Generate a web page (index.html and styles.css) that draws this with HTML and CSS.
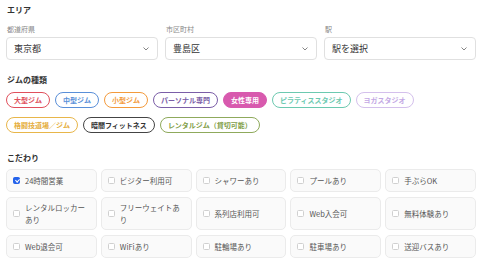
FILE: index.html
```html
<!DOCTYPE html>
<html lang="ja">
<head>
  <meta charset="UTF-8" />
  <meta name="viewport" content="width=device-width, initial-scale=1.0" />
  <title>ジム検索</title>
  <link rel="stylesheet" href="styles.css">
</head>
<body>
  <div class="search">

    <!-- エリア -->
    <h2 class="section-title first">エリア</h2>
    <div class="area-row">
      <div class="field">
        <label class="field-label">都道府県</label>
        <div class="select">
          <span>東京都</span>
          <svg class="chevron" viewBox="0 0 6 4"><path d="M0.5 0.5 L3 3 L5.5 0.5" /></svg>
        </div>
      </div>
      <div class="field">
        <label class="field-label">市区町村</label>
        <div class="select">
          <span>豊島区</span>
          <svg class="chevron" viewBox="0 0 6 4"><path d="M0.5 0.5 L3 3 L5.5 0.5" /></svg>
        </div>
      </div>
      <div class="field">
        <label class="field-label">駅</label>
        <div class="select">
          <span>駅を選択</span>
          <svg class="chevron" viewBox="0 0 6 4"><path d="M0.5 0.5 L3 3 L5.5 0.5" /></svg>
        </div>
      </div>
    </div>

    <!-- ジムの種類 -->
    <h2 class="section-title types-title">ジムの種類</h2>
    <div class="tags">
      <span class="tag tag-red">大型ジム</span>
      <span class="tag tag-blue">中型ジム</span>
      <span class="tag tag-orange">小型ジム</span>
      <span class="tag tag-purple">パーソナル専門</span>
      <span class="tag tag-pink active">女性専用</span>
      <span class="tag tag-teal">ピラティススタジオ</span>
      <span class="tag tag-lavender">ヨガスタジオ</span>
      <span class="tag tag-gold">格闘技道場／ジム</span>
      <span class="tag tag-dark">暗闇フィットネス</span>
      <span class="tag tag-olive">レンタルジム（貸切可能）</span>
    </div>

    <!-- こだわり -->
    <h2 class="section-title kodawari-title">こだわり</h2>
    <div class="options">
      <label class="option"><span class="check checked"></span><span>24時間営業</span></label>
      <label class="option"><span class="check"></span><span>ビジター利用可</span></label>
      <label class="option"><span class="check"></span><span>シャワーあり</span></label>
      <label class="option"><span class="check"></span><span>プールあり</span></label>
      <label class="option"><span class="check"></span><span>手ぶらOK</span></label>
      <label class="option"><span class="check"></span><span>レンタルロッカーあり</span></label>
      <label class="option"><span class="check"></span><span>フリーウェイトあり</span></label>
      <label class="option"><span class="check"></span><span>系列店利用可</span></label>
      <label class="option"><span class="check"></span><span>Web入会可</span></label>
      <label class="option"><span class="check"></span><span>無料体験あり</span></label>
      <label class="option"><span class="check"></span><span>Web退会可</span></label>
      <label class="option"><span class="check"></span><span>WiFiあり</span></label>
      <label class="option"><span class="check"></span><span>駐輪場あり</span></label>
      <label class="option"><span class="check"></span><span>駐車場あり</span></label>
      <label class="option"><span class="check"></span><span>送迎バスあり</span></label>
    </div>

  </div>
</body>
</html>
```

FILE: styles.css
```css
/* RESET */
* {
  margin: 0;
  padding: 0;
  box-sizing: border-box;
}

body {
  background-color: #fff;
  font-family: "Noto Sans CJK JP", "Noto Sans", sans-serif;
  color: #333;
}

.search {
  padding: 0 4px 0 6px;
}

/* 見出し */
.section-title {
  font-size: 8px;
  line-height: 12px;
  font-weight: 700;
  color: #333;
  padding-left: 1px;
}
.section-title.first {
  margin-top: 4px;
}
.types-title {
  margin-top: 14px;
}
.kodawari-title {
  margin-top: 19px;
}

/* エリア */
.area-row {
  display: flex;
  gap: 7px;
  margin-top: 8px;
}
.field {
  flex: 1;
}
.field-label {
  display: block;
  font-size: 7px;
  line-height: 10px;
  color: #888;
  padding-left: 1px;
}
.select {
  margin-top: 3px;
  height: 23px;
  border: 1px solid #e0e0e0;
  border-radius: 4px;
  padding: 0 8px 0 7px;
  display: flex;
  align-items: center;
  justify-content: space-between;
  font-size: 9px;
  color: #333;
  background-color: #fff;
}
.chevron {
  width: 6px;
  height: 4px;
  fill: none;
  stroke: #777;
  stroke-width: 0.9;
}

/* ジムの種類 */
.tags {
  display: flex;
  flex-wrap: wrap;
  gap: 9px 5px;
  margin-top: 6px;
}
.tag {
  display: inline-block;
  height: 16px;
  line-height: 14px;
  padding: 0 7px;
  border: 1px solid;
  border-radius: 8px;
  font-size: 7px;
  font-weight: 700;
  background-color: #fff;
}
.tag-red { color: #e0505c; border-color: #e0505c; }
.tag-blue { color: #5a8fd8; border-color: #5a8fd8; }
.tag-orange { color: #f39a3c; border-color: #f39a3c; }
.tag-purple { color: #7b5ea7; border-color: #7b5ea7; }
.tag-pink { color: #d85aae; border-color: #d85aae; }
.tag-pink.active { background-color: #d85aae; color: #fff; }
.tag-teal { color: #6cc9b0; border-color: #6cc9b0; }
.tag-lavender { color: #c3a8e4; border-color: #d4c0ec; }
.tag-gold { color: #e5ae3c; border-color: #e8b64a; }
.tag-dark { color: #333; border-color: #444; }
.tag-olive { color: #7f9e48; border-color: #8faa5c; }

/* こだわり */
.options {
  display: grid;
  grid-template-columns: repeat(5, 1fr);
  gap: 5px 4px;
  margin-top: 5px;
}
.option {
  display: flex;
  align-items: center;
  gap: 5px;
  min-height: 23px;
  padding: 4px 6px;
  border: 1px solid #ebebeb;
  border-radius: 5px;
  background-color: #fafafa;
  font-size: 7.5px;
  line-height: 11.5px;
  color: #555;
}
.check {
  flex: 0 0 7px;
  width: 7px;
  height: 7px;
  border: 1px solid #d0d0d0;
  border-radius: 1.5px;
  background-color: #fff;
  position: relative;
}
.check.checked {
  background-color: #2563eb;
  border-color: #2563eb;
}
.check.checked::after {
  content: "";
  position: absolute;
  left: 1.6px;
  top: 0.3px;
  width: 1.6px;
  height: 3.2px;
  border: solid #fff;
  border-width: 0 1px 1px 0;
  transform: rotate(45deg);
}
```
